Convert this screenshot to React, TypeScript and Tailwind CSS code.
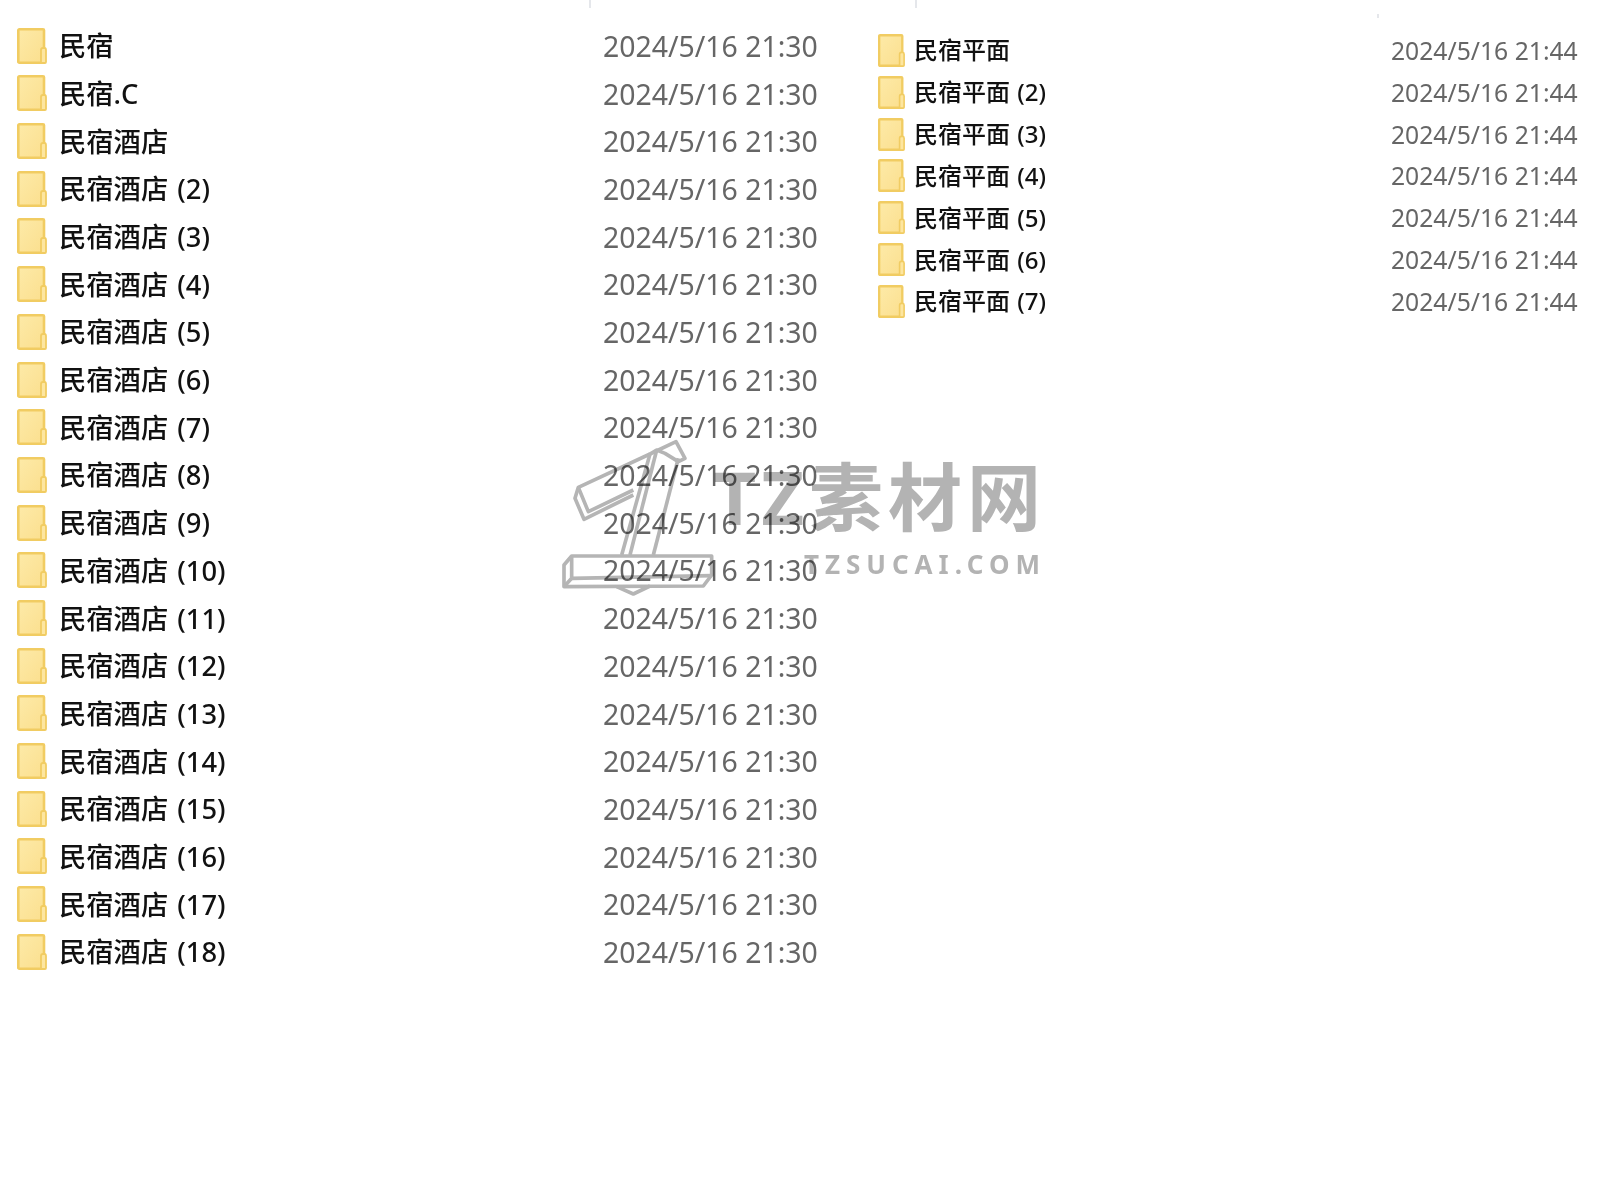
import React from 'react';

const leftNames = [
  '民宿', '民宿.C', '民宿酒店', '民宿酒店 (2)', '民宿酒店 (3)', '民宿酒店 (4)', '民宿酒店 (5)',
  '民宿酒店 (6)', '民宿酒店 (7)', '民宿酒店 (8)', '民宿酒店 (9)', '民宿酒店 (10)', '民宿酒店 (11)',
  '民宿酒店 (12)', '民宿酒店 (13)', '民宿酒店 (14)', '民宿酒店 (15)', '民宿酒店 (16)', '民宿酒店 (17)',
  '民宿酒店 (18)',
];

const rightNames = [
  '民宿平面', '民宿平面 (2)', '民宿平面 (3)', '民宿平面 (4)', '民宿平面 (5)', '民宿平面 (6)', '民宿平面 (7)',
];

const FolderIcon: React.FC<{ className: string }> = ({ className }) => (
  <svg viewBox="0 0 30 36" className={className} preserveAspectRatio="none">
    <defs>
      <linearGradient id="folderFill" x1="0" y1="0" x2="1" y2="1">
        <stop offset="0" stopColor="#fdeaa8" />
        <stop offset="1" stopColor="#fbdf8e" />
      </linearGradient>
    </defs>
    <rect x="1.3" y="1.3" width="25.7" height="33.4" rx="1" fill="url(#folderFill)" stroke="#f1cc62" strokeWidth="2.6" />
    <path d="M24 35 V22 Q24 20 26 20 H27.5 Q29 20 29 22 V34 Q29 35 28 35 Z" fill="#fde6a0" stroke="#f1cc62" strokeWidth="1.8" />
  </svg>
);

const Logo: React.FC = () => (
  <svg viewBox="0 0 540 540" className="w-[180px] h-[180px]" fill="none" stroke="#b5b5b5" strokeWidth="11" strokeLinejoin="round">
    <path d="M300 72 L85 172 L75 205 L102 268 L250 195" />
    <path d="M85 172 L115 245 L250 180" />
    <path d="M300 72 L215 375" />
    <path d="M320 60 L240 375" />
    <path d="M385 85 L310 375" />
    <path d="M300 72 L378 35 L405 85 L385 95 L345 70 L320 60 Z" />
    <path d="M65 378 L485 378 L485 435 L460 468 L42 470 L42 405 Z" />
    <path d="M65 378 L65 445 L42 470" />
    <path d="M65 445 L485 437" />
    <path d="M200 470 L250 492 L300 468" />
  </svg>
);

const App: React.FC = () => {
  return (
    <div
      className="relative w-[1600px] h-[1200px] overflow-hidden bg-white"
      style={{ fontFamily: '"Noto Sans", "Noto Sans CJK SC", sans-serif' }}
    >
      {/* header remnants */}
      <div className="absolute left-[589px] top-0 w-[2px] h-[8px] bg-gray-200" />
      <div className="absolute left-[915px] top-0 w-[2px] h-[8px] bg-gray-200" />
      <div className="absolute left-[1377px] top-[14px] w-[2px] h-[4px] bg-gray-200" />

      <div className="flex blur-[0.4px]">
        {/* left list */}
        <div className="w-[860px] pt-[22.4px] shrink-0">
          {leftNames.map((name) => (
            <div key={name} className="flex items-center h-[47.7px]">
              <FolderIcon className="ml-[17px] w-[30px] h-[36px] mt-[-1px] shrink-0" />
              <span className="ml-[12px] mt-[1px] w-[544px] shrink-0 text-[27.3px] font-medium [word-spacing:2px] text-[#111111] whitespace-nowrap">{name}</span>
              <span className="text-[28.4px] text-[#666666] whitespace-nowrap">2024/5/16 21:30</span>
            </div>
          ))}
        </div>

        {/* right list */}
        <div className="flex-1 pt-[29.5px]">
          {rightNames.map((name) => (
            <div key={name} className="flex items-center h-[41.84px]">
              <FolderIcon className="ml-[18px] w-[27px] h-[33px] shrink-0" />
              <span className="ml-[9px] w-[477px] shrink-0 text-[24px] font-medium [word-spacing:1px] text-[#111111] whitespace-nowrap">{name}</span>
              <span className="text-[24.7px] text-[#666666] whitespace-nowrap">2024/5/16 21:44</span>
            </div>
          ))}
        </div>
      </div>

      {/* watermark */}
      <div className="absolute left-[550px] top-[430px] mix-blend-multiply">
        <Logo />
      </div>
      <div className="absolute right-[554px] top-[447px] flex flex-col items-end mix-blend-multiply text-[#b3b3b3] font-bold">
        <div className="text-[74px] leading-[100px] whitespace-nowrap tracking-[5px]">TZ素材网</div>
        <div className="text-[26px] leading-[30px] whitespace-nowrap tracking-[6px] mt-[2px]">TZSUCAI.COM</div>
      </div>
    </div>
  );
};

export default App;
